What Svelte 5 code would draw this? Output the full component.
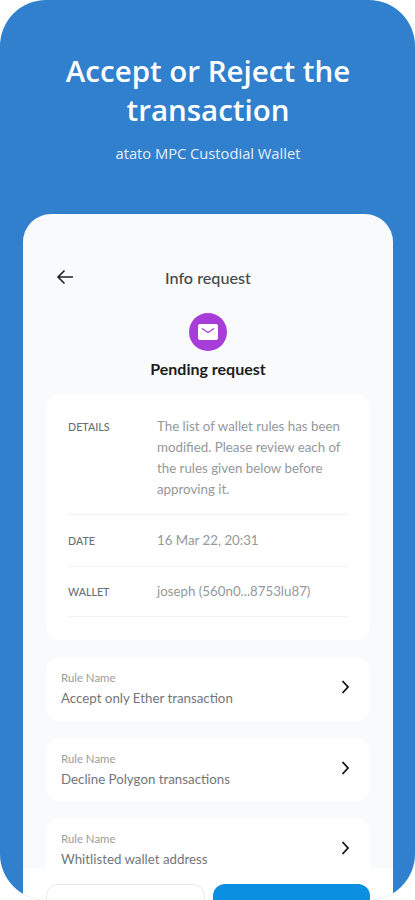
<script>
	const details = [
		{ label: 'Date', value: '16 Mar 22, 20:31' },
		{ label: 'Wallet', value: 'joseph (560n0...8753lu87)' }
	];

	const rules = ['Accept only Ether transaction', 'Decline Polygon transactions', 'Whitlisted wallet address'];
</script>

<main class="frame">
	<header class="hero">
		<h1>Accept or Reject the transaction</h1>
		<p>atato MPC Custodial Wallet</p>
	</header>

	<section class="phone">
		<div class="content">
			<div class="topbar">
				<svg class="back" width="18" height="16" viewBox="0 0 18 16" fill="none" stroke="#222" stroke-width="1.6">
					<path d="M17 8H2M8.5 1.5 2 8l6.5 6.5" />
				</svg>
				<h2>Info request</h2>
			</div>

			<div class="status">
				<div class="badge">
					<svg width="20" height="16" viewBox="0 0 20 16">
						<rect width="20" height="16" rx="2" fill="#fff" />
						<path d="M4 4.5 10 8.5l6-4" fill="none" stroke="#a83cd9" stroke-width="1.4" />
					</svg>
				</div>
				<h3>Pending request</h3>
			</div>

			<div class="card details">
				<div class="row first">
					<span class="label">Details</span>
					<span class="value">The list of wallet rules has been modified. Please review each of the rules given below before approving it.</span>
				</div>
				{#each details as d, i}
					<div class="row" class:last={i === details.length - 1}>
						<span class="label">{d.label}</span>
						<span class="value">{d.value}</span>
					</div>
				{/each}
			</div>

			{#each rules as rule}
				<div class="card rule">
					<div>
						<div class="rule-label">Rule Name</div>
						<div class="rule-name">{rule}</div>
					</div>
					<svg class="chevron" width="10" height="14" viewBox="0 0 10 14" fill="none" stroke="#111" stroke-width="1.8">
						<path d="M2.5 1l5.5 6-5.5 6" />
					</svg>
				</div>
			{/each}
		</div>

		<footer class="actions">
			<button class="btn reject" aria-label="Reject"></button>
			<button class="btn accept" aria-label="Accept"></button>
		</footer>
	</section>
</main>

<style>
	:global(body) {
		background: #fff;
	}

	.frame {
		box-sizing: border-box;
		width: 415px;
		height: 900px;
		padding: 0 22px 0 23px;
		background: #3180cd;
		border-radius: 46px;
		display: flex;
		flex-direction: column;
		overflow: hidden;
		font-family: Lato, sans-serif;
	}

	.hero {
		flex: 0 0 214px;
		padding-top: 51px;
		box-sizing: border-box;
		text-align: center;
		color: #fff;
		font-family: 'Open Sans', sans-serif;
	}

	h1 {
		margin: 0;
		padding: 0 20px;
		font-size: 29.5px;
		line-height: 39px;
		font-weight: 600;
	}

	.hero p {
		margin: 14px 0 0;
		font-size: 14.7px;
		line-height: 20px;
		color: #e4eefa;
	}

	.phone {
		flex: 1;
		min-height: 0;
		display: flex;
		flex-direction: column;
		background: #f8fafc;
		border-radius: 28px 28px 0 0;
		overflow: hidden;
	}

	.content {
		flex: 1;
		min-height: 0;
		overflow: hidden;
		padding: 0 23px;
	}

	.topbar {
		position: relative;
		height: 28px;
		margin-top: 50px;
		display: flex;
		align-items: center;
		justify-content: center;
	}

	.back {
		position: absolute;
		left: 10px;
		top: 5px;
	}

	h2 {
		margin: 0 0 2px;
		font-size: 16.2px;
		font-weight: 500;
		color: #45474b;
	}

	.status {
		margin-top: 21px;
		display: flex;
		flex-direction: column;
		align-items: center;
	}

	.badge {
		width: 38px;
		height: 38px;
		border-radius: 50%;
		background: #a83cd9;
		display: flex;
		align-items: center;
		justify-content: center;
	}

	h3 {
		margin: 8px 0 0;
		font-size: 16px;
		line-height: 20px;
		font-weight: 700;
		color: #1c1d20;
	}

	.card {
		background: #fff;
		border-radius: 14px;
	}

	.details {
		margin-top: 15px;
		height: 246px;
		box-sizing: border-box;
		padding: 22px 22px 0;
	}

	.row {
		display: flex;
		align-items: center;
		height: 51px;
		border-bottom: 1px solid #f1f3f5;
	}

	.row.first {
		height: 98px;
		align-items: flex-start;
	}

	.row.last {
		height: 49px;
	}

	.label {
		flex: 0 0 89px;
		font-size: 10.7px;
		font-weight: 500;
		text-transform: uppercase;
		color: #6a6f73;
	}

	.first .label {
		line-height: 21px;
	}

	.value {
		width: 194px;
		font-size: 13.3px;
		line-height: 21px;
		color: #94989c;
	}

	.rule {
		margin-top: 17px;
		height: 63.5px;
		box-sizing: border-box;
		padding: 0 20px 0 15px;
		display: flex;
		align-items: center;
		justify-content: space-between;
	}

	.chevron {
		margin-top: -3px;
	}

	.rule-label {
		font-size: 11.4px;
		line-height: 16px;
		color: #989ca0;
	}

	.rule-name {
		margin-top: 4px;
		font-size: 13.3px;
		line-height: 17px;
		color: #71767a;
	}

	.actions {
		flex: 0 0 32px;
		box-sizing: border-box;
		background: #fff;
		padding: 16px 23px 0;
		display: flex;
		gap: 8px;
		overflow: hidden;
	}

	.btn {
		flex: 1;
		height: 44px;
		border-radius: 12px;
		padding: 0;
	}

	.reject {
		background: #fff;
		border: 1px solid #e6e8ea;
	}

	.accept {
		background: #0b8fe0;
		border: 0;
	}
</style>
